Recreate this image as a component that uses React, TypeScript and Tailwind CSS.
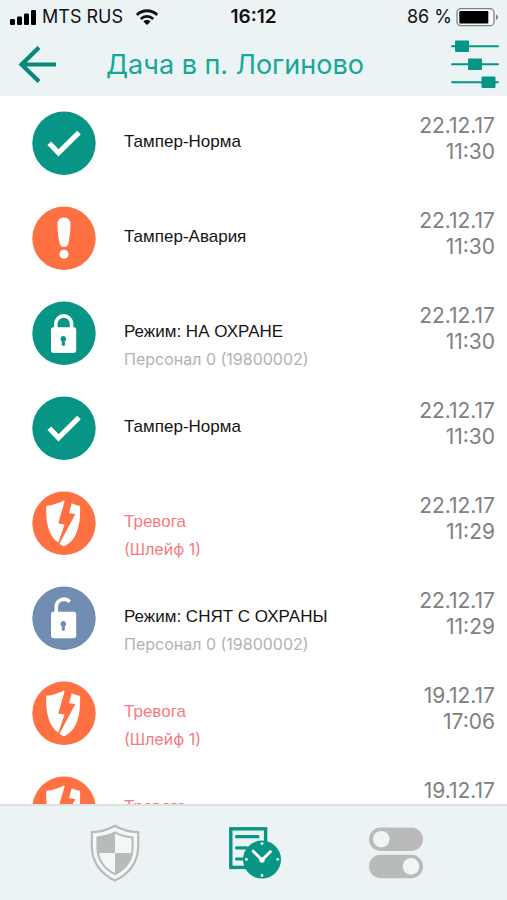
import { useState } from "react";
import type { ReactNode } from "react";

type EventKind = "ok" | "warning" | "armed" | "disarmed" | "alarm";

interface SecurityEvent {
  id: number;
  kind: EventKind;
  title: string;
  details?: string;
  date: string;
  time?: string;
}

const events: SecurityEvent[] = [
  { id: 1, kind: "ok", title: "Тампер-Норма", date: "22.12.17", time: "11:30" },
  { id: 2, kind: "warning", title: "Тампер-Авария", date: "22.12.17", time: "11:30" },
  { id: 3, kind: "armed", title: "Режим: НА ОХРАНЕ", details: "Персонал 0 (19800002)", date: "22.12.17", time: "11:30" },
  { id: 4, kind: "ok", title: "Тампер-Норма", date: "22.12.17", time: "11:30" },
  { id: 5, kind: "alarm", title: "Тревога", details: "(Шлейф 1)", date: "22.12.17", time: "11:29" },
  { id: 6, kind: "disarmed", title: "Режим: СНЯТ С ОХРАНЫ", details: "Персонал 0 (19800002)", date: "22.12.17", time: "11:29" },
  { id: 7, kind: "alarm", title: "Тревога", details: "(Шлейф 1)", date: "19.12.17", time: "17:06" },
  { id: 8, kind: "alarm", title: "Тревога", date: "19.12.17" },
];

const badgeColors: Record<EventKind, string> = {
  ok: "text-[#079685]",
  warning: "text-[#ff7043]",
  armed: "text-[#079685]",
  disarmed: "text-[#718db2]",
  alarm: "text-[#ff7043]",
};

const glyphs: Record<EventKind, ReactNode> = {
  ok: <path d="M17.3 32.3 26.5 41.8 47 21.5" fill="none" stroke="#fff" strokeWidth="5.2" />,
  warning: (
    <g fill="#fff">
      <path d="M32 11.5c4.2 0 6.6 2.8 6.5 7-.1 6-.8 12.500-1.900 18.200-.6 2.900-2.100 4.300-4.600 4.300s-4-1.400-4.600-4.300c-1.100-5.700-1.800-12.200-1.900-18.200-.1-4.200 2.300-7 6.500-7z" />
      <circle cx="32" cy="48.3" r="4.5" />
    </g>
  ),
  armed: (
    <>
      <path d="M23.8 28v-5.2a7.9 7.9 0 0 1 15.8 0V28" fill="none" stroke="#fff" strokeWidth="3.6" />
      <rect x="19" y="26.3" width="25.2" height="25.6" rx="2.4" fill="#fff" />
      <path d="M31.3 35a3 3 0 0 1 1.5 5.5v4.2h-3v-4.2a3 3 0 0 1 1.5-5.5z" fill="currentColor" />
    </>
  ),
  disarmed: (
    <>
      <path d="M24.3 28v-7.2a7.7 7.7 0 0 1 13.4-5" fill="none" stroke="#fff" strokeWidth="3.6" />
      <rect x="19" y="25.8" width="25.2" height="26.4" rx="2.4" fill="#fff" />
      <path d="M31.3 35a3 3 0 0 1 1.5 5.5v4.2h-3v-4.2a3 3 0 0 1 1.5-5.5z" fill="currentColor" />
    </>
  ),
  alarm: (
    <g fill="#fff">
      <path d="M14.3 14.8C20.5 14.4 26.5 12.6 31.8 9.6L32.6 10.4 26.2 32.4 32.6 33.4 26.4 51.6C18.5 47 13.2 34 14.3 14.8z" />
      <path d="M39.7 12.2C42.4 13.5 45 14.3 48 14.8 49 34 44.5 50.5 32 55.2 30.2 54.8 28.8 54 27.4 52.8L43.4 23 37 22.2z" />
    </g>
  ),
};

function EventRow({ event }: { event: SecurityEvent }) {
  const isAlarm = event.kind === "alarm";

  return (
    <li className="flex h-[95px] items-start pl-8 pr-3">
      <svg viewBox="0 0 64 64" className={`mt-[15px] size-16 shrink-0 ${badgeColors[event.kind]}`} aria-hidden="true">
        <circle cx="32" cy="32.300" r="31.7" fill="currentColor" />
        {glyphs[event.kind]}
      </svg>

      <div className="ml-7 min-w-0 flex-1 pt-[34px]">
        <p className={`font-['Liberation_Sans',sans-serif] text-[17px] leading-6 ${isAlarm ? "text-[#f47c80]" : "text-[#151515]"}`}>
          {event.title}
        </p>
        {event.details && (
          <p className={`mt-[3px] text-[16px] leading-6 ${isAlarm ? "text-[#f47c80]" : "text-[#b2b2b2]"}`}>
            {event.details}
          </p>
        )}
      </div>

      <div className="pt-[17px] text-right text-[21px] leading-[26px] text-[#808080]">
        <p>{event.date}</p>
        {event.time && <p>{event.time}</p>}
      </div>
    </li>
  );
}

function StatusBar() {
  return (
    <div className="grid h-[34px] grid-cols-[1fr_auto_1fr] items-center px-2 text-[18px] leading-6 text-[#111111]">
      <div className="flex items-center gap-1.5">
        <svg width="28" height="18" viewBox="0 0 28 18" aria-hidden="true">
          <rect x="2" y="11" width="5" height="6" rx="1.2" />
          <rect x="9" y="8.5" width="5" height="8.5" rx="1.2" />
          <rect x="16" y="5.5" width="5" height="11.5" rx="1.2" />
          <rect x="23" y="2" width="5" height="15" rx="1.2" />
        </svg>
        <span>MTS RUS</span>
        <svg width="24" height="18" viewBox="0 0 24 18" className="ml-1.5" aria-hidden="true">
          <g fill="none" stroke="#111" strokeWidth="2.8">
            <path d="M1.8 6.9a14.6 14.6 0 0 1 20.4 0" />
            <path d="M5.8 11a8.8 8.8 0 0 1 12.4 0" />
          </g>
          <path d="M8.4 13.4a5.2 5.2 0 0 1 7.2 0L12 17z" />
        </svg>
      </div>
      <span className="text-[19px] font-semibold">16:12</span>
      <div className="flex items-center justify-end gap-1">
        <span>86 %</span>
        <svg width="43" height="20" viewBox="0 0 43 20" aria-hidden="true">
          <rect x="1" y="1.7" width="37" height="17" rx="4" fill="#f7fafa" stroke="#7d8283" strokeWidth="1.3" />
          <rect x="3.3" y="4" width="29" height="12.4" rx="1.2" fill="#000" />
          <path d="M40 7.5c2.6.8 2.6 4.6 0 5.4z" fill="#7d8283" />
        </svg>
      </div>
    </div>
  );
}

function ShieldIcon() {
  return (
    <svg width="50" height="58" viewBox="0 0 50 58" fill="none" aria-hidden="true">
      <path d="M25 1.8C18 6 10 8 1.8 8.2V22C1.8 38 11 50 25 56.6 39 50 48.2 38 48.2 22V8.2C40 8 32 6 25 1.8z" stroke="currentColor" strokeWidth="2.2" fill="#f3f7f7" />
      <path d="M25 8.4C19.5 11.4 13.5 13 7.4 13.4V23c0 12.4 6.7 21.7 17.6 27.2C35.900 44.700 42.600 35.400 42.600 23v-9.600C36.500 13 30.500 11.400 25 8.400z" stroke="currentColor" strokeWidth="2" />
      <path d="M25 8.2V29H8.2C7.5 24 7.4 18 7.5 13.5 13.5 13 19.5 11.5 25 8.2zM25 29h16.7C40 38.5 34.5 45.5 25 50.5z" fill="currentColor" />
    </svg>
  );
}

function HistoryIcon() {
  return (
    <svg width="52" height="52" viewBox="0 0 52 52" fill="none" aria-hidden="true">
      <rect x="1.8" y="1.8" width="34.8" height="38.6" stroke="currentColor" strokeWidth="3.4" />
      <path d="M7.5 9.7h21.5M7.5 20.8h10M7.5 32h8" stroke="currentColor" strokeWidth="3.2" strokeLinecap="round" />
      <circle cx="33" cy="32.6" r="19" fill="currentColor" />
      <path d="M24.2 24.2 33 33l8.3-8.3" stroke="#fff" strokeWidth="3" strokeLinecap="round" />
      <g fill="#fff">
        <circle cx="33" cy="33" r="2.7" />
        <circle cx="33" cy="16.6" r="1.4" />
        <circle cx="33" cy="48.4" r="1.4" />
        <circle cx="17.4" cy="32.4" r="1.4" />
        <circle cx="48.7" cy="32.4" r="1.4" />
      </g>
    </svg>
  );
}

function SwitchesIcon() {
  return (
    <svg width="54" height="52" viewBox="0 0 54 52" aria-hidden="true">
      <rect y="0.5" width="54" height="23.5" rx="11.7" fill="currentColor" />
      <rect y="27.7" width="54" height="23.5" rx="11.7" fill="currentColor" />
      <circle cx="12.3" cy="12.2" r="8.3" fill="#f0f5f5" />
      <circle cx="42" cy="39.4" r="8.3" fill="#f0f5f5" />
    </svg>
  );
}

const tabs = [
  { id: "guard", label: "Охрана", icon: <ShieldIcon /> },
  { id: "history", label: "История", icon: <HistoryIcon /> },
  { id: "control", label: "Управление", icon: <SwitchesIcon /> },
];

export default function App() {
  const [activeTab, setActiveTab] = useState("history");

  return (
    <div className="flex h-screen flex-col bg-white font-['Inter',sans-serif]">
      {/* Header */}
      <header className="shrink-0 bg-[#ebf3f5]">
        <StatusBar />
        <div className="flex h-[62px] items-center pl-[18px] pr-2">
          <button type="button" aria-label="Назад" className="text-[#078878]">
            <svg width="40" height="40" viewBox="0 0 40 40" fill="none" stroke="currentColor" strokeWidth="4.2" className="block" aria-hidden="true">
              <path d="M21 2.5 3.5 19.5 21 36.5M3.5 19.5H38" />
            </svg>
          </button>
          <h1 className="ml-12 min-w-0 flex-1 truncate text-[27px] leading-8 text-[#16a797]">Дача в п. Логиново</h1>
          <button type="button" aria-label="Фильтр" className="text-[#079685]">
            <svg width="48" height="50" viewBox="0 0 48 50" fill="currentColor" className="block" aria-hidden="true">
              <path d="M1 6.3h46M1 24.3h46M1 42.3h46" stroke="currentColor" strokeWidth="2" strokeLinecap="round" />
              <rect x="4" y="0.5" width="14" height="11.6" rx="1" />
              <rect x="17" y="18.5" width="14" height="11.6" rx="1" />
              <rect x="30.5" y="36.5" width="14" height="11.6" rx="1" />
            </svg>
          </button>
        </div>
      </header>

      {/* Event list */}
      <main className="min-h-0 flex-1 overflow-hidden">
        <ul>
          {events.map((event) => (
            <EventRow key={event.id} event={event} />
          ))}
        </ul>
      </main>

      {/* Tab bar */}
      <nav className="flex h-24 shrink-0 items-center justify-between border-t-2 border-[#dae1e2] bg-[#ebf3f5] pl-[90px] pr-[84px]">
        {tabs.map((tab) => (
          <button
            key={tab.id}
            type="button"
            aria-label={tab.label}
            onClick={() => setActiveTab(tab.id)}
            className={activeTab === tab.id ? "text-[#079685]" : "text-[#b9bbbb]"}
          >
            {tab.icon}
          </button>
        ))}
      </nav>
    </div>
  );
}
